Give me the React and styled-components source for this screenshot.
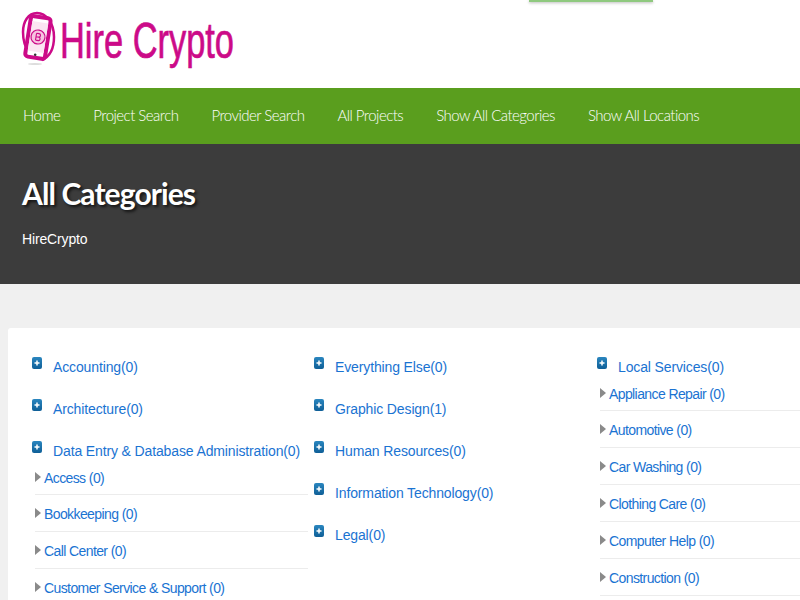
import styled, { createGlobalStyle } from "styled-components";

const GlobalStyle = createGlobalStyle`
  html, body {
    margin: 0;
    padding: 0;
    overflow: hidden;
    background: #f0f0f0;
    font-family: "Liberation Sans", Arial, sans-serif;
  }
`;

const Page = styled.div`
  width: 800px;
  height: 600px;
  overflow: hidden;
`;

const Header = styled.header`
  position: relative;
  display: flex;
  align-items: flex-start;
  height: 88px;
  padding: 10px 0 0 20px;
  box-sizing: border-box;
  background: #fff;
`;

const TopTab = styled.div`
  position: absolute;
  top: 0;
  left: 529px;
  width: 124px;
  height: 2px;
  background: #8fc97f;
  box-shadow: 0 1px 3px rgba(0, 0, 0, 0.3);
`;

const LogoText = styled.span`
  display: block;
  margin: 1px 0 0 2px;
  font-size: 50px;
  line-height: 60px;
  color: #cc0a88;
  white-space: nowrap;
  -webkit-text-stroke: 0.7px #cc0a88;
  transform: scaleX(0.688);
  transform-origin: left center;
`;

const Nav = styled.nav`
  display: flex;
  align-items: center;
  gap: 33px;
  height: 56px;
  padding: 0 0 2px 23px;
  box-sizing: border-box;
  background: #5a9e1e;
`;

const NavLink = styled.a`
  font-family: "Lato", sans-serif;
  font-size: 15px;
  font-weight: 300;
  letter-spacing: -0.52px;
  color: #fff;
`;

const Banner = styled.section`
  height: 140px;
  padding: 29px 0 0 22px;
  box-sizing: border-box;
  background: #3c3c3c;
  color: #fff;
`;

const Title = styled.h1`
  margin: 0;
  font-family: "Lato", sans-serif;
  font-size: 30px;
  line-height: 40px;
  font-weight: 700;
  letter-spacing: -0.9px;
  text-shadow: 2px 2px 3px rgba(0, 0, 0, 0.7);
`;

const Crumb = styled.div`
  margin-top: 17px;
  font-size: 14px;
  line-height: 18px;
  letter-spacing: -0.15px;
`;

const Content = styled.main`
  padding: 44px 0 0 8px;
`;

const Card = styled.div`
  display: grid;
  grid-template-columns: 282px 283px 283px;
  width: 900px;
  height: 300px;
  padding: 28px 0 0 24px;
  box-sizing: border-box;
  background: #fff;
  border-radius: 3px 0 0 0;
`;

const Column = styled.div`
  display: flex;
  flex-direction: column;
  align-items: flex-start;
`;

const Category = styled.div`
  display: flex;
  align-items: flex-start;
  height: 22px;
  margin-bottom: ${(p) => (p.$open ? "0" : "20px")};
`;

const PlusBox = styled.span`
  display: flex;
  width: 10px;
  height: 12px;
  margin-top: 1px;
  margin-right: 11px;
  border-radius: 2px;
  background: linear-gradient(#2a86bf, #0f5f97);
  align-items: center;
  justify-content: center;
  flex-shrink: 0;
  svg {
    display: block;
  }
`;

const CategoryLink = styled.a`
  font-size: 14px;
  line-height: 22px;
  letter-spacing: -0.13px;
  color: #1a73d2;
  white-space: nowrap;
`;

const SubLink = styled.a`
  font-size: 14px;
  line-height: 22px;
  letter-spacing: -0.6px;
  color: #1a73d2;
  white-space: nowrap;
`;

const SubList = styled.ul`
  margin: 0;
  padding: 0 0 0 3px;
  list-style: none;
  width: ${(p) => p.$width}px;
`;

const SubItem = styled.li`
  display: flex;
  align-items: center;
  box-sizing: border-box;
  height: 37px;
  padding-top: 1px;
  border-bottom: 1px solid #ececec;
  &:first-child {
    height: 33px;
    padding: 0 0 1px;
  }
`;

const Arrow = styled.span`
  width: 0;
  height: 0;
  margin: 0 3px 2px 0;
  border-style: solid;
  border-width: 5.5px 0 5.5px 6px;
  border-color: transparent transparent transparent #8a8a8a;
`;

const columns = [
  {
    cats: [
      { name: "Accounting(0)" },
      { name: "Architecture(0)" },
      {
        name: "Data Entry & Database Administration(0)",
        subs: ["Access (0)", "Bookkeeping (0)", "Call Center (0)", "Customer Service & Support (0)"],
      },
    ],
  },
  {
    cats: [
      { name: "Everything Else(0)" },
      { name: "Graphic Design(1)" },
      { name: "Human Resources(0)" },
      { name: "Information Technology(0)" },
      { name: "Legal(0)" },
    ],
  },
  {
    cats: [
      {
        name: "Local Services(0)",
        subs: [
          "Appliance Repair (0)",
          "Automotive (0)",
          "Car Washing (0)",
          "Clothing Care (0)",
          "Computer Help (0)",
          "Construction (0)",
        ],
      },
    ],
    wide: true,
  },
];

const navItems = ["Home", "Project Search", "Provider Search", "All Projects", "Show All Categories", "Show All Locations"];

function Logo() {
  return (
    <svg width="38" height="58" viewBox="0 0 38 58" fill="none">
      <path d="M22 50C31 46 34 37 34 27C34 13 26 3 17 3C8 3 3 12 3 22C3 30 5 37 9 42" stroke="#cc0a88" strokeWidth="2.5" />
      <g transform="rotate(9 18 27)">
        <rect x="8" y="7" width="20" height="41" rx="3" fill="#fff" stroke="#cc0a88" strokeWidth="4" />
        <rect x="10" y="12" width="16" height="30" fill="#fbe6f2" />
        <circle cx="18" cy="27" r="7" fill="#f6c4e0" stroke="#cc0a88" strokeWidth="1.2" />
        <path d="M16 23.5v7M16 23.5h2.5a1.7 1.7 0 0 1 0 3.5H16h3a1.8 1.8 0 0 1 0 3.5h-3" stroke="#cc0a88" strokeWidth="1.1" />
        <circle cx="18" cy="45" r="1.3" fill="#333" />
      </g>
      <ellipse cx="15" cy="54" rx="7" ry="1" fill="#ddd" />
    </svg>
  );
}

function Plus() {
  return (
    <svg width="6" height="6" viewBox="0 0 6 6">
      <path d="M3 0.5v5M0.5 3h5" stroke="#fff" strokeWidth="1.5" />
    </svg>
  );
}

export default function App() {
  return (
    <Page>
      <GlobalStyle />
      <Header>
        <Logo />
        <LogoText>Hire Crypto</LogoText>
        <TopTab />
      </Header>
      <Nav>
        {navItems.map((item) => (
          <NavLink key={item}>{item}</NavLink>
        ))}
      </Nav>
      <Banner>
        <Title>All Categories</Title>
        <Crumb>HireCrypto</Crumb>
      </Banner>
      <Content>
        <Card>
          {columns.map((col, i) => (
            <Column key={i}>
              {col.cats.map((cat) => (
                <div key={cat.name}>
                  <Category $open={!!cat.subs}>
                    <PlusBox>
                      <Plus />
                    </PlusBox>
                    <CategoryLink>{cat.name}</CategoryLink>
                  </Category>
                  {cat.subs && (
                    <SubList $width={col.wide ? 300 : 273}>
                      {cat.subs.map((sub) => (
                        <SubItem key={sub}>
                          <Arrow />
                          <SubLink>{sub}</SubLink>
                        </SubItem>
                      ))}
                    </SubList>
                  )}
                </div>
              ))}
            </Column>
          ))}
        </Card>
      </Content>
    </Page>
  );
}
